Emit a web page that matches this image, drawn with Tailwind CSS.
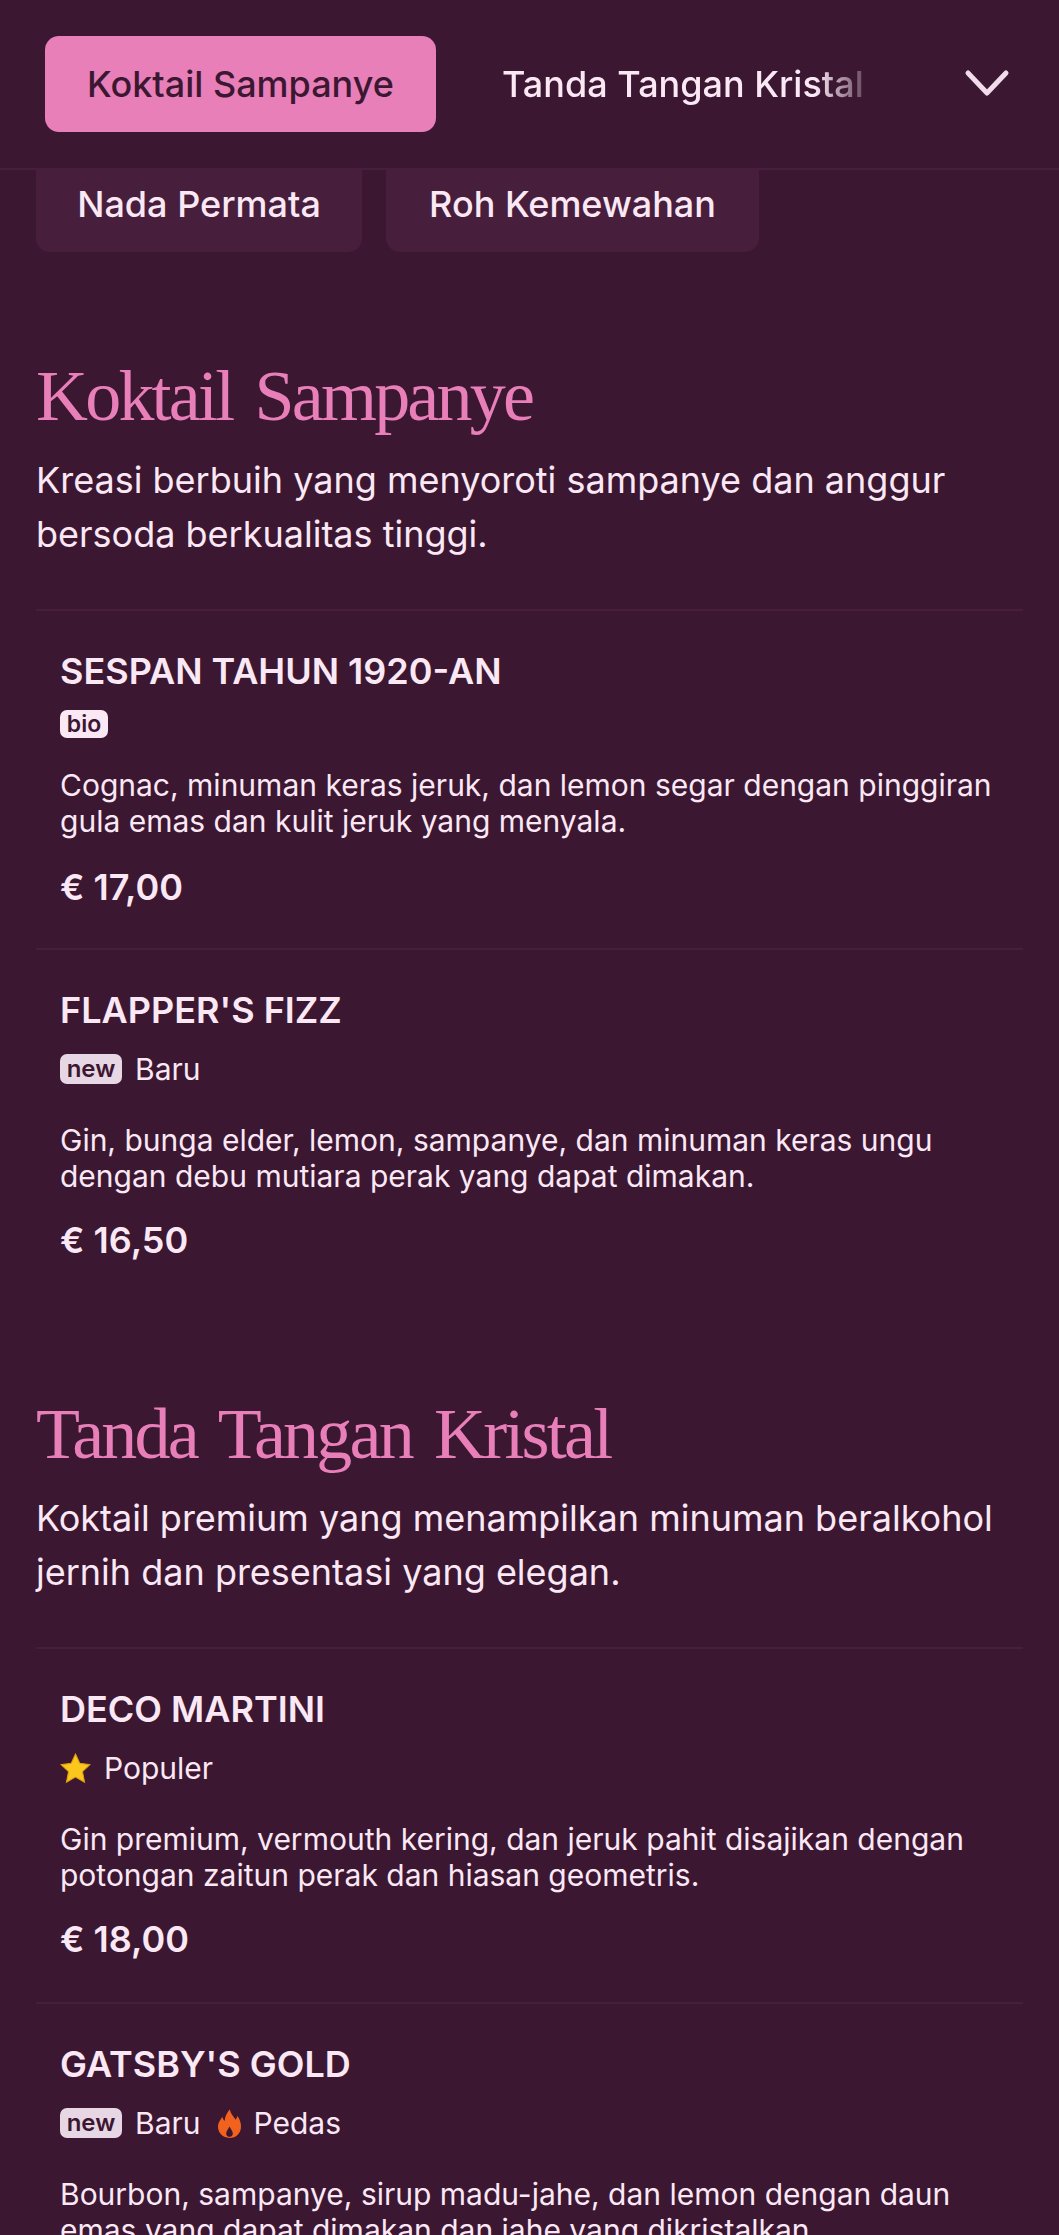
<!DOCTYPE html>
<html lang="id">
<head>
    <meta charset="UTF-8">
    <title>Menu</title>
    <script src="https://cdn.jsdelivr.net/npm/@tailwindcss/browser@4"></script>
</head>
<body class="bg-[#3b1732] h-screen overflow-hidden font-['Inter',sans-serif] text-[#fbe8f5]">

    <!-- Category nav -->
    <header class="relative z-10 h-[170px] bg-[#3b1732] border-b-2 border-[#471f3c] flex items-center pl-[45px]">
        <div class="w-[820px] flex items-center gap-[24px] overflow-hidden">
            <a class="shrink-0 h-[96px] w-[391px] rounded-[14px] bg-[#e87fb8] text-[#3b1732] text-[36px] font-medium flex items-center justify-center">Koktail Sampanye</a>
            <a class="shrink-0 h-[96px] pl-[42px] text-[36px] font-medium flex items-center [mask-image:linear-gradient(to_right,black_88%,transparent_104%)]">Tanda Tangan Kristal</a>
        </div>
        <svg class="absolute left-[964px] top-[68px] w-[46px] h-[30px] text-[#f0dcea]" viewBox="0 0 46 30" fill="none" stroke="currentColor" stroke-width="5" stroke-linecap="round" stroke-linejoin="round">
            <path d="M4 5 L23 25 L42 5"/>
        </svg>
    </header>

    <main class="px-[36px]">
        <div class="flex gap-[24px] -mt-[14px]">
            <a class="h-[96px] w-[326px] rounded-[14px] bg-[#471f3c] text-[36px] font-medium flex items-center justify-center">Nada Permata</a>
            <a class="h-[96px] w-[373px] rounded-[14px] bg-[#471f3c] text-[36px] font-medium flex items-center justify-center">Roh Kemewahan</a>
        </div>

        <!-- Koktail Sampanye -->
        <section class="mt-[102px]">
            <h2 class="font-['Liberation_Serif',serif] text-[72px] leading-[84px] tracking-[-2.8px] [word-spacing:7px] text-[#e87fb8]">Koktail Sampanye</h2>
            <p class="mt-[15px] text-[36px] leading-[54px]">Kreasi berbuih yang menyoroti sampanye dan anggur bersoda berkualitas tinggi.</p>

            <article class="mt-[48px] border-t-2 border-[#471f3c] px-[24px] pt-[38px] h-[339px]">
                <h3 class="text-[36px] leading-[44px] font-semibold">SESPAN TAHUN 1920-AN</h3>
                <div class="mt-[16px] h-[30px] flex items-center">
                    <span class="h-[28px] w-[48px] rounded-[7px] bg-[#fbe8f5] text-[#3b1732] text-[23px] font-semibold flex items-center justify-center">bio</span>
                </div>
                <p class="mt-[28px] text-[30px] leading-[36px]">Cognac, minuman keras jeruk, dan lemon segar dengan pinggiran gula emas dan kulit jeruk yang menyala.</p>
                <p class="mt-[26px] text-[36px] leading-[44px] font-semibold">€ 17,00</p>
            </article>

            <article class="border-t-2 border-[#471f3c] px-[24px] pt-[38px]">
                <h3 class="text-[36px] leading-[44px] font-semibold">FLAPPER'S FIZZ</h3>
                <div class="mt-[22px] h-[30px] flex items-center gap-[13px] text-[30px]">
                    <span class="h-[30px] w-[62px] rounded-[7px] bg-[#e7d6e3] text-[#3b1732] text-[24px] font-semibold flex items-center justify-center">new</span>
                    <span>Baru</span>
                </div>
                <p class="mt-[38px] text-[30px] leading-[36px]">Gin, bunga elder, lemon, sampanye, dan minuman keras ungu dengan debu mutiara perak yang dapat dimakan.</p>
                <p class="mt-[24px] text-[36px] leading-[44px] font-semibold">€ 16,50</p>
            </article>
        </section>

        <!-- Tanda Tangan Kristal -->
        <section class="mt-[130px]">
            <h2 class="font-['Liberation_Serif',serif] text-[72px] leading-[84px] tracking-[-2.8px] [word-spacing:7px] text-[#e87fb8]">Tanda Tangan Kristal</h2>
            <p class="mt-[15px] text-[36px] leading-[54px]">Koktail premium yang menampilkan minuman beralkohol jernih dan presentasi yang elegan.</p>

            <article class="mt-[48px] border-t-2 border-[#471f3c] px-[24px] pt-[38px] h-[355px]">
                <h3 class="text-[36px] leading-[44px] font-semibold">DECO MARTINI</h3>
                <div class="mt-[22px] h-[30px] flex items-center gap-[13px] text-[30px]">
                    <svg class="w-[31px] h-[31px]" viewBox="0 0 24 24" fill="#fbc71c" stroke="#dc9f10" stroke-width="0.8" stroke-linejoin="miter">
                        <path d="M12 0.8 L15.3 8 L23.2 9 L17.4 14.4 L19 22.6 L12 18.6 L5 22.6 L6.6 14.4 L0.8 9 L8.7 8 Z"/>
                    </svg>
                    <span>Populer</span>
                </div>
                <p class="mt-[38px] text-[30px] leading-[36px]">Gin premium, vermouth kering, dan jeruk pahit disajikan dengan potongan zaitun perak dan hiasan geometris.</p>
                <p class="mt-[24px] text-[36px] leading-[44px] font-semibold">€ 18,00</p>
            </article>

            <article class="border-t-2 border-[#471f3c] px-[24px] pt-[38px]">
                <h3 class="text-[36px] leading-[44px] font-semibold">GATSBY'S GOLD</h3>
                <div class="mt-[22px] h-[30px] flex items-center gap-[13px] text-[30px]">
                    <span class="h-[30px] w-[62px] rounded-[7px] bg-[#e7d6e3] text-[#3b1732] text-[24px] font-semibold flex items-center justify-center">new</span>
                    <span>Baru</span>
                    <svg class="ml-[4px] w-[23px] h-[31px]" viewBox="0 0 24 30" fill="#f2621f">
                        <path fill-rule="evenodd" d="M12.5 0 C13 5 16.5 7.5 18.5 11 C19.5 9.5 20 8.5 20 7 C22.5 10 24 14 24 18 C24 25 19 30 12 30 C5 30 0 25 0 18.5 C0 14 2.5 11.5 4.5 8 C5 10 5.5 11 7 12.5 C7 7.5 9.5 3.5 12.5 0 Z M12 18 C10.5 21 8.5 23 8.5 25.5 C8.5 27.5 10 29 12 29 C14 29 15.5 27.5 15.5 25.5 C15.5 23 13.5 21 12 18 Z"/>
                    </svg>
                    <span>Pedas</span>
                </div>
                <p class="mt-[38px] text-[30px] leading-[36px]">Bourbon, sampanye, sirup madu-jahe, dan lemon dengan daun emas yang dapat dimakan dan jahe yang dikristalkan.</p>
            </article>
        </section>
    </main>

</body>
</html>
